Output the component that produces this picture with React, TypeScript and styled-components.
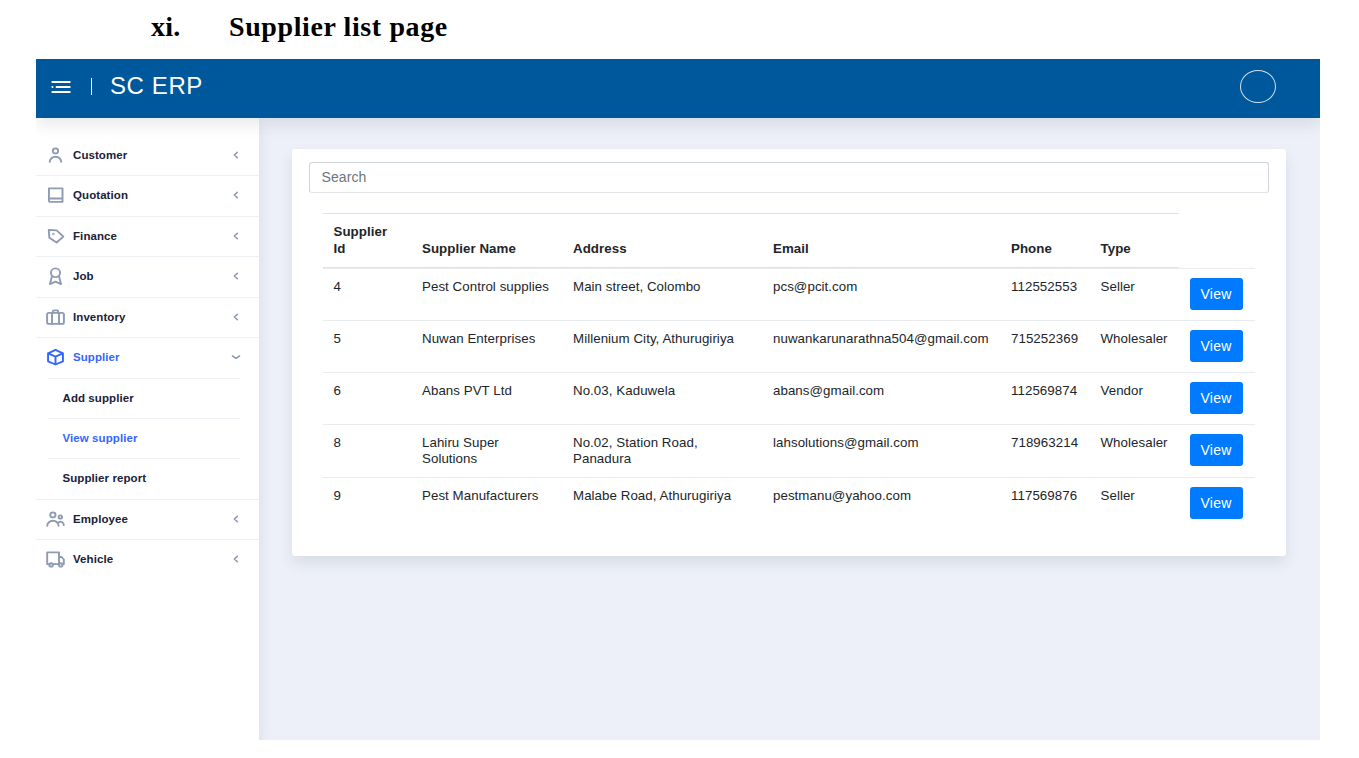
import React from "react";
import styled, { createGlobalStyle, css } from "styled-components";

const Global = createGlobalStyle`
  *, *::before, *::after { box-sizing: border-box; }
  body { margin: 0; background: #fff; font-family: "Liberation Sans", Arial, sans-serif; }
  button, input { font-family: inherit; }
`;

const Page = styled.div`
  width: 1359px;
  height: 758px;
  padding-left: 36px;
  overflow: hidden;
`;

const Heading = styled.h1`
  display: flex;
  margin: 0;
  height: 59px;
  padding: 11px 0 0 115px;
  font: bold 28px/32px "Liberation Serif", "Times New Roman", serif;
  letter-spacing: 0.6px;
  color: #000;
`;

const Numeral = styled.span`
  width: 78px;
  letter-spacing: 0.2px;
`;

const Shell = styled.div`
  width: 1284px;
  height: 681px;
  display: flex;
  flex-direction: column;
  overflow: hidden;
  background: #edf0f8;
`;

const Header = styled.header`
  position: relative;
  z-index: 2;
  flex: none;
  height: 59px;
  display: flex;
  align-items: center;
  padding: 0 44px 4px 14px;
  background: #00589c;
  color: #fff;
  box-shadow: 0 7px 14px rgba(44, 51, 73, 0.1);
`;

const MenuToggle = styled.button`
  display: flex;
  padding: 0;
  border: 0;
  background: none;
  color: inherit;
`;

const Brand = styled.div`
  margin-left: 19px;
  padding-left: 19px;
  padding-bottom: 1px;
  position: relative;
  font-size: 24px;
  line-height: 28px;
  letter-spacing: 0.6px;
  &::before {
    content: "";
    position: absolute;
    left: 0;
    top: 6px;
    width: 1px;
    height: 17px;
    background: #fff;
  }
`;

const Avatar = styled.div`
  margin-left: auto;
  width: 36px;
  height: 33px;
  border: 1px solid #d5e3ef;
  border-radius: 50%;
`;

const Body = styled.div`
  flex: 1;
  display: flex;
`;

const Sidebar = styled.nav`
  position: relative;
  z-index: 1;
  width: 223px;
  padding-top: 17px;
  background: #fff;
  box-shadow: 0 7px 14px rgba(44, 51, 73, 0.1);
`;

const itemText = css<{ $active?: boolean }>`
  font-size: 11.5px;
  font-weight: bold;
  letter-spacing: 0.08px;
  color: ${(p) => (p.$active ? "#3366ff" : "#1a2138")};
`;

const MenuItem = styled.a<{ $active?: boolean; $first?: boolean }>`
  ${itemText}
  height: 40.43px;
  display: flex;
  align-items: center;
  padding: 0 17px 1.4px 9px;
  border-top: 1px solid ${(p) => (p.$first ? "transparent" : "#edf0f5")};
`;

const ItemLabel = styled.span`
  flex: 1;
  margin-left: 7px;
`;

const SubMenu = styled.div`
  padding: 0 19px 0 12px;
`;

const SubItem = styled.a<{ $active?: boolean }>`
  ${itemText}
  height: 40.43px;
  display: flex;
  align-items: center;
  padding: 0 0 1.4px 14.5px;
  border-top: 1px solid #edf0f5;
`;

const Icon = styled.svg<{ $active?: boolean }>`
  width: 21px;
  height: 20.2px;
  fill: none;
  stroke: ${(p) => (p.$active ? "#3366ff" : "#8f9bb3")};
  stroke-width: 2.2;
  stroke-linecap: round;
  stroke-linejoin: round;
`;

const Chevron = styled.svg`
  width: 12px;
  height: 12px;
  fill: none;
  stroke: #8f9bb3;
  stroke-width: 1.6;
  stroke-linecap: round;
  stroke-linejoin: round;
`;

const Main = styled.main`
  flex: 1;
  padding: 31px 34px 0 32.5px;
`;

const Card = styled.section`
  height: 407px;
  padding: 13px 17.5px 0;
  background: #fff;
  border-radius: 3px;
  box-shadow: 0 7px 14px rgba(44, 51, 73, 0.1);
`;

const SearchInput = styled.input`
  display: block;
  width: 100%;
  height: 31px;
  padding: 0 11.5px 1px;
  border: 1px solid #ced4da;
  border-bottom-color: #dfe3e8;
  border-radius: 3px;
  font-size: 14px;
  letter-spacing: 0.1px;
  outline: none;
  &::placeholder { color: #6c757d; opacity: 1; }
`;

const Table = styled.div`
  width: 932px;
  margin: 20px 0 0 14px;
  font-size: 13.3px;
  line-height: 16.7px;
  letter-spacing: 0.06px;
  color: #212529;
`;

const columns = "88.5px 151px 200px 238px 89.5px 89px 76px";

const HeadRow = styled.div`
  display: grid;
  grid-template-columns: ${columns};
  align-items: end;
  width: 856px;
  height: 55px;
  border-top: 1px solid #dee2e6;
  border-bottom: 1px solid #dee2e6;
  overflow: hidden;
`;

const HeadCell = styled.div`
  padding: 0 10.5px 9.5px;
  font-weight: bold;
`;

const Row = styled.div<{ $height: number }>`
  display: grid;
  grid-template-columns: ${columns};
  height: ${(p) => p.$height}px;
  border-top: 1px solid #e9ecef;
`;

const Cell = styled.div`
  padding: 9.5px 10.5px 0;
`;

const ViewButton = styled.button`
  display: block;
  width: 53px;
  height: 32px;
  padding: 0 0 1px;
  border: 0;
  border-radius: 3px;
  background: #007bff;
  color: #fff;
  font-size: 14px;
  letter-spacing: 0.2px;
`;

const shapes: Record<string, React.ReactNode> = {
  person: <><circle cx="12" cy="7" r="3" /><path d="M5.500 20a6.500 6 0 0 1 13 0" /></>,
  book: <path d="M4.500 4h15.500v16H5.500a1 1 0 0 1-1-1zM4.500 16h15.500" />,
  tag: <><path d="M4.300 4.600l9 .6L21 12.600l-7.800 7L5 14z" /><circle cx="9.500" cy="9.500" r=".4" /></>,
  award: <><circle cx="12" cy="8" r="5.200" /><path d="M8 12L5.700 21.500l6.300-3 6.300 3L16 12" /></>,
  briefcase: <><rect x="2.400" y="7" width="19.200" height="13" rx="2" /><path d="M8 7v13M16 7v13M9 7V5a1 1 0 0 1 1-1h4a1 1 0 0 1 1 1v2" /></>,
  cube: <path d="M12 3.500l8.500 4v9.500L12 20.800 3.500 17V7.500zM3.500 7.500l8.500 4 8.500-4M12 11.500v9" />,
  people: <><circle cx="9" cy="7" r="3" /><circle cx="17.500" cy="9.500" r="2" /><path d="M2.500 20a6.500 6 0 0 1 13 0M16 15.500a4 4 0 0 1 5.500 3.500" /></>,
  truck: <><path d="M5 18H2.500V4h13.500v14H9M16 9.500h3l2.500 3v5.500h-1" /><circle cx="7" cy="19" r="2" /><circle cx="18" cy="19" r="2" /></>,
};

const sections = [
  { label: "Customer", icon: "person" },
  { label: "Quotation", icon: "book" },
  { label: "Finance", icon: "tag" },
  { label: "Job", icon: "award" },
  { label: "Inventory", icon: "briefcase" },
  { label: "Supplier", icon: "cube", children: ["Add supplier", "View supplier", "Supplier report"] },
  { label: "Employee", icon: "people" },
  { label: "Vehicle", icon: "truck" },
];

const suppliers = [
  ["4", "Pest Control supplies", "Main street, Colombo", "pcs@pcit.com", "112552553", "Seller"],
  ["5", "Nuwan Enterprises", "Millenium City, Athurugiriya", "nuwankarunarathna504@gmail.com", "715252369", "Wholesaler"],
  ["6", "Abans PVT Ltd", "No.03, Kaduwela", "abans@gmail.com", "112569874", "Vendor"],
  ["8", "Lahiru Super Solutions", "No.02, Station Road, Panadura", "lahsolutions@gmail.com", "718963214", "Wholesaler"],
  ["9", "Pest Manufacturers", "Malabe Road, Athurugiriya", "pestmanu@yahoo.com", "117569876", "Seller"],
];

const ActionCell = styled.div`
  padding: 9.4px 10.5px 0;
`;

export default function App() {
  return (
    <Page>
      <Global />
      <Heading><Numeral>xi.</Numeral>Supplier list page</Heading>
      <Shell>
        <Header>
          <MenuToggle aria-label="Toggle menu">
            <svg width="22" height="20" viewBox="0 0 22 20" fill="none" stroke="#fff" strokeWidth="1.8" strokeLinecap="round">
              <path d="M2.300 5h17.500M6.500 10h13.300M2.300 15h17.500M2.300 10h.3" />
            </svg>
          </MenuToggle>
          <Brand>SC ERP</Brand>
          <Avatar />
        </Header>
        <Body>
          <Sidebar>
            {sections.map((s, i) => (
              <React.Fragment key={s.label}>
                <MenuItem $active={!!s.children} $first={i === 0}>
                  <Icon viewBox="0 0 24 24" preserveAspectRatio="none" $active={!!s.children}>{shapes[s.icon]}</Icon>
                  <ItemLabel>{s.label}</ItemLabel>
                  <Chevron viewBox="0 0 12 12"><path d={s.children ? "M2.500 5l3.500 2.300L9.500 5" : "M7.300 3.300L4.300 6l3 2.700"} /></Chevron>
                </MenuItem>
                {s.children && (
                  <SubMenu>
                    {s.children.map((c) => <SubItem key={c} $active={c === "View supplier"}>{c}</SubItem>)}
                  </SubMenu>
                )}
              </React.Fragment>
            ))}
          </Sidebar>
          <Main>
            <Card>
              <SearchInput placeholder="Search" />
              <Table>
                <HeadRow>
                  {["Supplier Id", "Supplier Name", "Address", "Email", "Phone", "Type"].map((h) => <HeadCell key={h}>{h}</HeadCell>)}
                </HeadRow>
                {suppliers.map((r) => (
                  <Row key={r[0]} $height={r[0] === "8" ? 53 : 52}>
                    {r.map((v, i) => <Cell key={i}>{v}</Cell>)}
                    <ActionCell><ViewButton>View</ViewButton></ActionCell>
                  </Row>
                ))}
              </Table>
            </Card>
          </Main>
        </Body>
      </Shell>
    </Page>
  );
}
